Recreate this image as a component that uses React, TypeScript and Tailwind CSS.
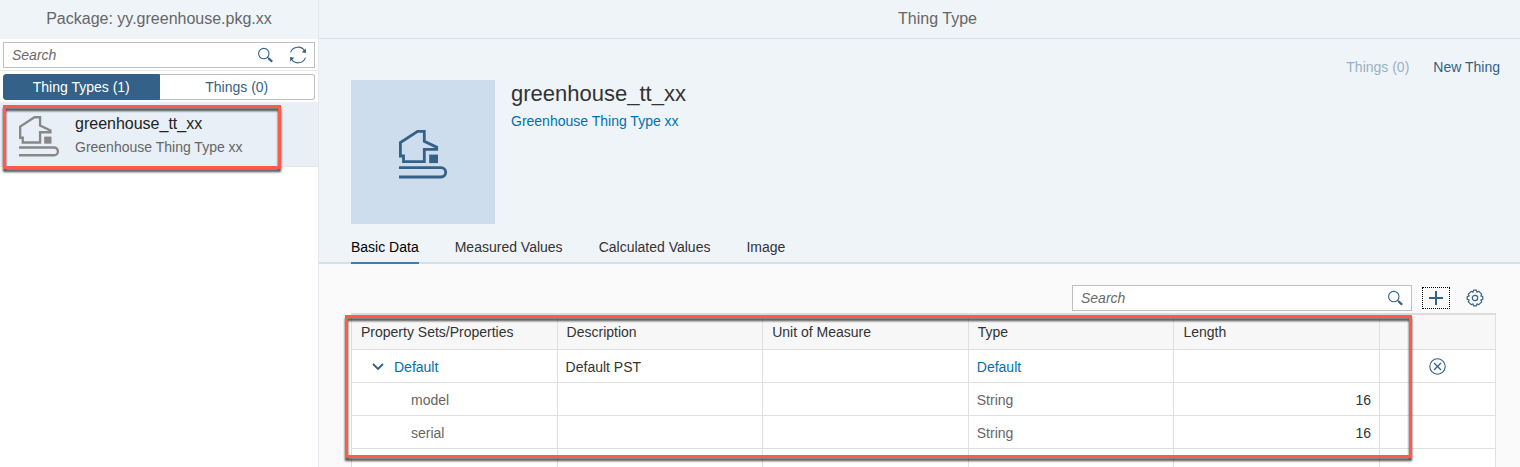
import React from 'react';

type IconProps = { className?: string };

const HouseIcon = ({ className }: IconProps) => (
  <svg viewBox="0 0 48 49" fill="none" className={className} aria-hidden="true">
    <g stroke="currentColor" strokeWidth="2.8">
      <path d="M18.6 1.4H25.3V11.3L37.7 17.2V19.4H25.3V31.7H4.5V26H1.4V12.6Z" />
      <path d="M0 37.7H42A4.65 4.65 0 0 1 42 47H0" />
    </g>
    <rect x="30.2" y="24.6" width="8.8" height="8.5" fill="currentColor" />
  </svg>
);

const SearchIcon = () => (
  <svg viewBox="0 0 16 16" fill="none" stroke="currentColor" className="size-4" aria-hidden="true">
    <circle cx="6.8" cy="6.6" r="5.2" strokeWidth="1.1" />
    <path d="M10.4 10.2l1.6 1.6" strokeWidth="1.2" />
    <path d="M11.6 11.4l3.6 3.4" strokeWidth="2.2" />
  </svg>
);

const RefreshIcon = () => (
  <svg viewBox="0 0 18 18" fill="none" className="size-[18px]" aria-hidden="true">
    <path d="M1.6 6.4A7.8 7.8 0 0 1 15.8 5.2M16.4 11.6A7.8 7.8 0 0 1 2.2 12.8" stroke="currentColor" strokeWidth="1.1" />
    <path d="M16.9 2.6V6.9L12.6 6.3ZM1.1 15.4V11.1L5.4 11.7Z" fill="currentColor" />
  </svg>
);

const PlusIcon = () => (
  <svg viewBox="0 0 14 14" className="size-3.5" aria-hidden="true">
    <path d="M7 0v14M0 7h14" stroke="currentColor" strokeWidth="2" />
  </svg>
);

const GearIcon = () => (
  <svg viewBox="0 0 18 18" fill="none" stroke="currentColor" strokeWidth="1.2" strokeLinejoin="round" className="size-[18px]" aria-hidden="true">
    <path d="M7 3.2L7.6 1.2H10.4L11 3.2L12.8 2.3L15.7 5.2L14.8 7L16.8 7.6V10.4L14.8 11L15.7 12.8L12.8 15.7L11 14.8L10.4 16.8H7.6L7 14.8L5.2 15.7L2.3 12.8L3.2 11L1.2 10.4V7.6L3.2 7L2.3 5.2L5.2 2.3Z" />
    <circle cx="9" cy="9" r="2.7" />
  </svg>
);

const RemoveIcon = () => (
  <svg viewBox="0 0 17 17" fill="none" stroke="currentColor" className="size-[17px]" aria-hidden="true">
    <circle cx="8.5" cy="8.5" r="7.7" strokeWidth="1.1" />
    <path d="M5 5l7 7M12 5l-7 7" strokeWidth="1.3" />
  </svg>
);

const ChevronIcon = () => (
  <svg viewBox="0 0 12 8" fill="none" className="h-2 w-3" aria-hidden="true">
    <path d="M1 1l5 5 5-5" stroke="currentColor" strokeWidth="1.9" />
  </svg>
);

const Highlight = ({ className }: { className: string }) => (
  <div
    className={`pointer-events-none absolute border-3 border-[#ff5b4b] drop-shadow-[0px_3px_1px_rgba(0,0,0,0.7)] ${className}`}
  />
);

const tabs = ['Basic Data', 'Measured Values', 'Calculated Values', 'Image'];
const columns = ['Property Sets/Properties', 'Description', 'Unit of Measure', 'Type', 'Length'];
const properties = [
  { name: 'model', type: 'String', length: 16 },
  { name: 'serial', type: 'String', length: 16 },
];

const cell = 'border-r border-b border-[#e0e0e0] px-2 pt-0.5';

function Sidebar() {
  return (
    <aside className="flex w-[319px] shrink-0 flex-col border-r border-[#e5e9ed] bg-white">
      <header className="flex h-[39px] items-center justify-center bg-[#eff4f8] pb-0.5 text-base text-[#666]">
        <h1>Package: yy.greenhouse.pkg.xx</h1>
      </header>
      <div className="border-b border-[#e8e8e8] p-[3px] pb-0.5">
        <div className="flex h-[26px] items-center border border-[#bfbfbf] bg-white pr-[7px] text-[#346187]">
          <input
            type="text"
            aria-label="Search types"
            placeholder="Search"
            className="min-w-0 flex-1 pl-2 text-sm text-[#333] outline-none placeholder:text-[#6a6a6a] placeholder:italic"
          />
          <button type="button" aria-label="Search" className="mr-4"><SearchIcon /></button>
          <button type="button" aria-label="Refresh"><RefreshIcon /></button>
        </div>
      </div>
      <div className="flex px-[3px] pt-[3px] pb-0.5 text-sm">
        <button type="button" aria-pressed="true" className="h-[26px] flex-1 rounded-l-[3px] border border-[#346187] bg-[#346187] text-white">
          Thing Types (1)
        </button>
        <button type="button" aria-pressed="false" className="h-[26px] flex-1 rounded-r-[3px] border border-l-0 border-[#bfbfbf] bg-white text-[#346187]">
          Things (0)
        </button>
      </div>
      <ul>
        <li className="relative">
          <a href="#greenhouse" className="flex h-[65px] items-center border-b border-[#e5e5e5] bg-[#e8eff7] pt-1 pl-[19px]">
            <HouseIcon className="h-[41px] w-10 text-[#888]" />
            <span className="ml-4 flex flex-col pb-0.5">
              <span className="mb-[3px] text-base leading-5 text-[#222]">greenhouse_tt_xx</span>
              <span className="text-sm leading-5 text-[#666]">Greenhouse Thing Type xx</span>
            </span>
          </a>
          <Highlight className="top-[3px] right-[37px] -bottom-0.5 left-[3px]" />
        </li>
      </ul>
    </aside>
  );
}

function PropertyTable() {
  return (
    <div className="relative mt-0.5">
      <table className="w-full table-fixed border-separate border-spacing-0 border-t-2 border-l border-[#dcdcdc] bg-white text-left text-sm text-[#333]">
        <colgroup>
          <col /><col /><col /><col /><col />
          <col className="w-[116px]" />
        </colgroup>
        <thead>
          <tr className="h-[35px] bg-[#f7f7f7]">
            {columns.map((c) => (
              <th key={c} scope="col" className="border-r border-b border-[#dfdfdf] px-[9px] font-normal">{c}</th>
            ))}
            <th scope="col" aria-label="Actions" className="border-r border-b border-[#dfdfdf]" />
          </tr>
        </thead>
        <tbody>
          <tr className="h-[33px]">
            <td className={cell}>
              <div className="flex items-center pl-3 text-[#346187]">
                <button type="button" aria-label="Collapse Default" aria-expanded="true"><ChevronIcon /></button>
                <a href="#default" className="ml-[10px] text-[#0070b1]">Default</a>
              </div>
            </td>
            <td className={cell}>Default PST</td>
            <td className={cell} />
            <td className={cell}><a href="#type" className="text-[#0070b1]">Default</a></td>
            <td className={cell} />
            <td className="border-r border-b border-[#e0e0e0]">
              <button type="button" aria-label="Remove Default" className="mx-auto block text-[#346187]"><RemoveIcon /></button>
            </td>
          </tr>
          {properties.map((p) => (
            <tr key={p.name} className="h-[33px]">
              <td className={cell}><span className="pl-[51px] text-[#666]">{p.name}</span></td>
              <td className={cell} />
              <td className={cell} />
              <td className={`${cell} text-[#666]`}>{p.type}</td>
              <td className={`${cell} text-right`}>{p.length}</td>
              <td className={cell} />
            </tr>
          ))}
          <tr className="h-[33px]">
            {[0, 1, 2, 3, 4, 5].map((i) => <td key={i} className={cell} />)}
          </tr>
        </tbody>
      </table>
      <Highlight className="top-0.5 right-[84px] bottom-[24px] -left-1.5" />
    </div>
  );
}

export default function App() {
  return (
    <div className="flex h-screen overflow-hidden font-['Liberation_Sans',Arial,sans-serif]">
      <Sidebar />
      <main className="flex min-w-0 flex-1 flex-col bg-[#fafafa]">
        <header className="flex h-[39px] shrink-0 items-center justify-center border-b border-[#d1e0ee] bg-[#eff4f8] pl-9 text-base text-[#666]">
          <h2>Thing Type</h2>
        </header>
        <section className="shrink-0 border-b-2 border-[#d1e0ec] bg-[#eff4f8] pr-5 pl-8">
          <div className="flex items-start pt-[41px]">
            <div className="flex size-36 items-center justify-center bg-[#cddded]">
              <HouseIcon className="mt-1 h-[49px] w-12 text-[#346187]" />
            </div>
            <div className="ml-4 flex-1">
              <h3 className="pt-0.5 text-[22px] leading-6 text-[#333]">greenhouse_tt_xx</h3>
              <p className="mt-[5px] text-sm leading-5 text-[#0070b1]">Greenhouse Thing Type xx</p>
            </div>
            <div className="-mt-[23px] flex gap-6 text-sm leading-5">
              <button type="button" disabled className="text-[#9ab0c3]">Things (0)</button>
              <button type="button" className="text-[#346187]">New Thing</button>
            </div>
          </div>
          <nav className="-mb-0.5 flex gap-9 pt-3 text-sm text-[#333]">
            {tabs.map((t, i) => (
              <a
                key={t}
                href="#tab"
                className={i === 0 ? 'h-7 border-b-2 border-[#427cac] leading-[22px] text-black' : 'h-7 leading-[22px]'}
              >
                {t}
              </a>
            ))}
          </nav>
        </section>
        <section className="pt-[21px] pr-6 pl-8">
          <div className="flex items-center justify-end pr-3 text-[#346187]">
            <div className="flex h-[26px] w-[340px] items-center border border-[#bfbfbf] bg-white pr-2">
              <input
                type="text"
                aria-label="Search properties"
                placeholder="Search"
                className="min-w-0 flex-1 pl-2 text-sm text-[#333] outline-none placeholder:text-[#6a6a6a] placeholder:italic"
              />
              <button type="button" aria-label="Search"><SearchIcon /></button>
            </div>
            <button type="button" aria-label="Add" className="ml-[10px] flex h-[22px] w-7 items-center justify-center border border-dotted border-black">
              <PlusIcon />
            </button>
            <button type="button" aria-label="Settings" className="ml-4"><GearIcon /></button>
          </div>
          <PropertyTable />
        </section>
      </main>
    </div>
  );
}
